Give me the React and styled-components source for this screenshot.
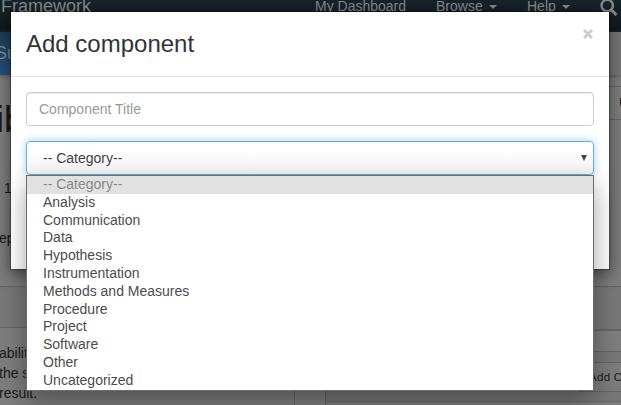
import React from "react";
import styled, { createGlobalStyle } from "styled-components";

const GlobalStyle = createGlobalStyle`
  * { box-sizing: border-box; }
  body { margin: 0; font-family: "Liberation Sans", Arial, sans-serif; }
`;

const Screen = styled.div`
  position: relative;
  width: 621px;
  height: 405px;
  overflow: hidden;
  background: #7d7d7d;
  color: #191919;
  font-size: 14px;
  line-height: 20px;
  white-space: nowrap;
`;

const TopBar = styled.header`
  display: flex;
  height: 32px;
  background: linear-gradient(#17232a, #10191e);
  border-bottom: 1px solid #0b1114;
  color: #858789;
`;

const Brand = styled.div`
  flex: 0 0 315px;
  font-size: 18px;
  line-height: 20px;
  margin-top: -4px;
  padding-left: 1px;
`;

const NavItem = styled.div`
  display: flex;
  align-items: center;
  flex: 0 0 ${(p) => p.$width}px;
  height: 20px;
  margin-top: -4px;
  gap: 6px;
`;

const Caret = styled.i`
  margin-top: 2px;
  border: 4px solid transparent;
  border-top-color: #858789;
  border-bottom: 0;
`;

const SearchIcon = styled.svg`
  flex: none;
  width: 18px;
  height: 18px;
  margin-top: -2px;
`;

const SubNav = styled.nav`
  display: flex;
  height: 43px;
  background: #767676;
  box-shadow: 0 1px 4px #555;
`;

const ActiveTab = styled.div`
  width: 120px;
  padding-top: 11px;
  background: linear-gradient(#1d3d59, #24527b);
  color: #7d8b96;
  font-size: 18px;
  text-indent: -5px;
`;

const TitleRow = styled.div`
  display: flex;
  justify-content: space-between;
  height: 211px;
  padding-top: 11px;
`;

const ProjectInfo = styled.div`
  width: 200px;
`;

const ProjectTitle = styled.h1`
  margin: 14px 0 0 -4px;
  font-size: 36px;
  line-height: 40px;
  font-weight: 400;
`;

const InfoLine = styled.div`
  margin-top: ${(p) => p.$gap}px;
  padding-left: ${(p) => p.$indent || 0}px;
  text-indent: ${(p) => (p.$indent ? 0 : -1)}px;
`;

const PageAction = styled.div`
  width: 40px;
  height: 34px;
  padding: 6px 0 0 37px;
  overflow: hidden;
  border: 1px solid #646464;
  border-right: 0;
  font-size: 13px;
`;

const Columns = styled.div`
  display: flex;
  gap: 30px;
  height: 119px;
`;

const Panel = styled.section`
  flex: ${(p) => (p.$grow ? "1" : "0 0 295px")};
  border: solid #646464;
  border-width: 1px ${(p) => (p.$grow ? 0 : 1)}px 0 ${(p) => (p.$grow ? 1 : 0)}px;
`;

const PanelHeading = styled.div`
  height: ${(p) => p.$height}px;
  background: #777;
  border-bottom: ${(p) => p.$line || 1}px solid #656565;
`;

const Description = styled.p`
  margin: 15px 0 0 -1px;
`;

const Strip = styled.div`
  height: 21px;
  border-bottom: 1px solid #646464;
`;

const ComponentBar = styled.div`
  display: flex;
  justify-content: flex-end;
  height: 50px;
  padding-top: 10px;
  background: #777;
  border-bottom: 1px solid #656565;
`;

const AddButton = styled.div`
  width: 43px;
  height: 30px;
  padding-left: 10px;
  overflow: hidden;
  border: 1px solid #646464;
  border-right: 0;
  background: #7c7c7c;
  font-size: 11.5px;
  line-height: 28px;
  letter-spacing: 0.3px;
`;

const Modal = styled.div`
  position: absolute;
  left: 11px;
  top: 12px;
  width: 598px;
  height: 257px;
  background: #fff;
  box-shadow: 0 0 1px 1px rgba(0, 0, 0, 0.25), 0 5px 15px rgba(0, 0, 0, 0.5);
`;

const ModalHeader = styled.div`
  display: flex;
  justify-content: space-between;
  height: 65px;
  padding: 15px;
  border-bottom: 1px solid #e5e5e5;
`;

const ModalTitle = styled.h3`
  margin: 0;
  color: #333;
  font-size: 24px;
  font-weight: 400;
  line-height: 34px;
`;

const Close = styled.svg`
  width: 10px;
  height: 10px;
  margin-top: 2px;
  margin-right: 1px;
`;

const ModalBody = styled.div`
  display: grid;
  gap: 15px;
  padding: 15px;
`;

const TitleInput = styled.div`
  height: 34px;
  padding: 0 12px;
  border: 1px solid #ccc;
  border-radius: 4px;
  box-shadow: inset 0 1px 1px rgba(0, 0, 0, 0.075);
  color: #999;
  line-height: 32px;
`;

const Field = styled.div`
  position: relative;
`;

const Select = styled.div`
  display: flex;
  align-items: center;
  justify-content: space-between;
  height: 34px;
  padding: 0 6px 0 16px;
  border: 1px solid #66afe9;
  border-radius: 4px;
  background: linear-gradient(#fff 20%, #f5f5f5);
  box-shadow: 0 0 8px rgba(102, 175, 233, 0.6);
  color: #444;
`;

const SelectArrow = styled.svg`
  width: 6px;
  height: 6px;
`;

const Options = styled.div`
  position: absolute;
  top: 34px;
  left: 0;
  width: 568px;
  height: 216px;
  border: 1px solid #6d6d6d;
  background: #fff;
  box-shadow: 0 10px 24px rgba(0, 0, 0, 0.36);
`;

const Option = styled.div`
  height: 17.8px;
  padding-left: 16px;
  line-height: 17px;
  color: ${(p) => (p.$selected ? "#888" : "#4c4c4c")};
  background: ${(p) => (p.$selected ? "#e3e1df" : "transparent")};
`;

const categories = [
  "-- Category--", "Analysis", "Communication", "Data", "Hypothesis",
  "Instrumentation", "Methods and Measures", "Procedure", "Project",
  "Software", "Other", "Uncategorized",
];

function ProjectPage() {
  return (
    <>
      <TopBar>
        <Brand>Framework</Brand>
        <NavItem $width={121}>My Dashboard</NavItem>
        <NavItem $width={91}>Browse <Caret /></NavItem>
        <NavItem $width={73}>Help <Caret /></NavItem>
        <SearchIcon viewBox="0 0 18 18" fill="none" stroke="#858789">
          <circle cx="7.2" cy="7.5" r="5.7" strokeWidth="2.4" />
          <path d="m11.5 12 5 5" strokeWidth="3" />
        </SearchIcon>
      </TopBar>
      <SubNav><ActiveTab>Summary</ActiveTab></SubNav>
      <TitleRow>
        <ProjectInfo>
          <ProjectTitle>ib</ProjectTitle>
          <InfoLine $gap={38} $indent={4}>1</InfoLine>
          <InfoLine $gap={30}>ep</InfoLine>
        </ProjectInfo>
        <PageAction>U</PageAction>
      </TitleRow>
      <Columns>
        <Panel>
          <PanelHeading $height={41} />
          <Description>ability of<br />the same<br />result.</Description>
        </Panel>
        <Panel $grow>
          <PanelHeading $height={44} $line={2} />
          <Strip />
          <ComponentBar><AddButton>Add Component</AddButton></ComponentBar>
        </Panel>
      </Columns>
    </>
  );
}

export default function App() {
  return (
    <Screen>
      <GlobalStyle />
      <ProjectPage />
      <Modal>
        <ModalHeader>
          <ModalTitle>Add component</ModalTitle>
          <Close viewBox="0 0 10 10" stroke="#ccc" strokeWidth="2.8">
            <path d="m1 1 8 8M9 1 1 9" />
          </Close>
        </ModalHeader>
        <ModalBody>
          <TitleInput>Component Title</TitleInput>
          <Field>
            <Select>
              -- Category--
              <SelectArrow viewBox="0 0 6 6"><path d="M0 0h6L3 6Z" fill="#444" /></SelectArrow>
            </Select>
            <Options>
              {categories.map((name, i) => (
                <Option key={name} $selected={i === 0}>{name}</Option>
              ))}
            </Options>
          </Field>
        </ModalBody>
      </Modal>
    </Screen>
  );
}
